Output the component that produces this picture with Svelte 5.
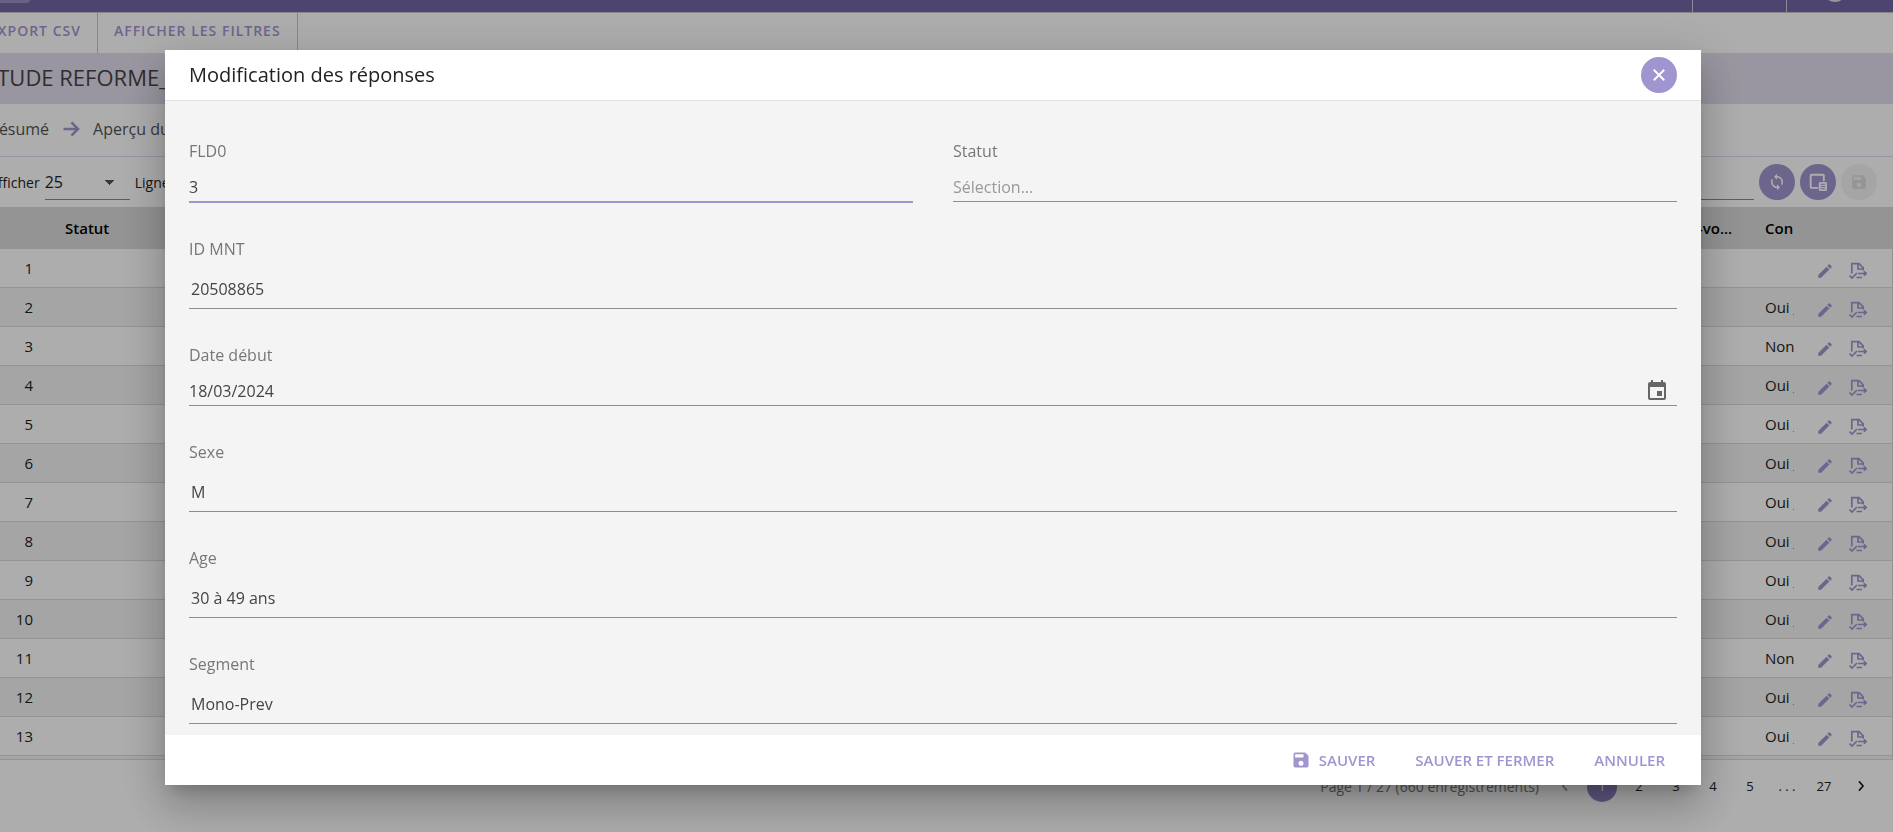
<script lang="ts">
	type Field = {
		id: string;
		label: string;
		value: string;
		kind: "text" | "select" | "date" | "area";
	};

	const rows = ["", "Oui _", "Non", "Oui _", "Oui _", "Oui _", "Oui _", "Oui _", "Oui _", "Oui _", "Non", "Oui _", "Oui _"];
	const pages = ["1", "2", "3", "4", "5"];

	let fields = $state<Field[]>([
		{ id: "fld0", label: "FLD0", value: "3", kind: "text" },
		{ id: "statut", label: "Statut", value: "", kind: "select" },
		{ id: "id-mnt", label: "ID MNT", value: "20508865", kind: "area" },
		{ id: "date-debut", label: "Date début", value: "18/03/2024", kind: "date" },
		{ id: "sexe", label: "Sexe", value: "M", kind: "area" },
		{ id: "age", label: "Age", value: "30 à 49 ans", kind: "area" },
		{ id: "segment", label: "Segment", value: "Mono-Prev", kind: "area" }
	]);
	let pageSize = $state("25");
</script>

{#snippet saveIcon()}
	<svg viewBox="0 0 24 24" aria-hidden="true">
		<path d="M17 3H5a2 2 0 0 0-2 2v14a2 2 0 0 0 2 2h14a2 2 0 0 0 2-2V7l-4-4zm-5 16a3 3 0 1 1 0-6 3 3 0 0 1 0 6zm3-10H5V5h10v4z" />
	</svg>
{/snippet}

<div class="page">
	<header class="topbar">
		<span class="topbar-menu"></span>
		<span class="topbar-cell"></span>
		<span class="topbar-cell user"><i class="avatar"></i></span>
	</header>

	<nav class="actions">
		<button>EXPORT CSV</button>
		<button>AFFICHER LES FILTRES</button>
	</nav>

	<h1>ETUDE REFORME_</h1>

	<nav class="breadcrumb">
		<a href="#resume">Résumé</a>
		<svg viewBox="0 0 24 24" aria-hidden="true"><path d="M3 12h17M12.500 4l8 8-8 8" /></svg>
		<span>Aperçu du</span>
	</nav>

	<div class="tools">
		<label for="page-size">Afficher</label>
		<select id="page-size" bind:value={pageSize}>
			<option>25</option>
			<option>50</option>
		</select>
		<span>Ligne</span>
		<input class="search" type="text" aria-label="Rechercher" />
		<button class="round" aria-label="Rafraîchir">
			<svg viewBox="0 0 24 24"><path d="M12 4V1L8 5l4 4V6a6 6 0 0 1 5.250 8.800l1.460 1.460A8 8 0 0 0 12 4zm0 14a6 6 0 0 1-5.250-8.800L5.290 7.740A8 8 0 0 0 12 20v3l4-4-4-4v3z" /></svg>
		</button>
		<button class="round" aria-label="Colonnes">
			<svg viewBox="0 0 24 24">
				<path d="M3 1h16a2 2 0 0 1 2 2v8h-2.500V3.500h-15v15H12V21H3a2 2 0 0 1-2-2V3a2 2 0 0 1 2-2z" />
				<path fill-rule="evenodd" d="M15 12h7a2 2 0 0 1 2 2v8a2 2 0 0 1-2 2h-7a2 2 0 0 1-2-2v-8a2 2 0 0 1 2-2zm.5 2.200v1.300h6v-1.300zm0 3v1.300h6v-1.300zm0 3v1.300h6v-1.300z" />
			</svg>
		</button>
		<button class="round" disabled aria-label="Enregistrer">{@render saveIcon()}</button>
	</div>

	<div class="grid">
		<table>
			<colgroup>
				<col class="col-index" />
				<col />
				<col class="col-call" />
				<col class="col-contact" />
				<col class="col-actions" />
			</colgroup>
			<thead>
				<tr>
					<th></th>
					<th>Statut</th>
					<th>Rendez-vo...</th>
					<th>Con</th>
					<th></th>
				</tr>
			</thead>
			<tbody>
				{#each rows as contact, i}
					<tr>
						<td class="index">{i + 1}</td>
						<td></td>
						<td></td>
						<td><div class="clip">{contact}</div></td>
						<td class="row-actions">
							<div>
								<button aria-label="Modifier">
									<svg viewBox="0 0 24 24"><path d="M3 17.250V21h3.750L17.810 9.940l-3.750-3.750L3 17.250zM20.710 7.040a1 1 0 0 0 0-1.410l-2.340-2.340a1 1 0 0 0-1.410 0l-1.830 1.830 3.750 3.750 1.830-1.830z" /></svg>
								</button>
								<button aria-label="Exporter">
									<svg class="outline" viewBox="0 0 18 18"><path d="M2.800 11.500V1.700H10l4.200 4.200v2.600M9 2v5h5M.5 13.500L3 16l5-5M9 11.500h8M14.800 9.300l2.500 2.200-2.500 2.200M7.500 15.500H13" /></svg>
								</button>
							</div>
						</td>
					</tr>
				{/each}
			</tbody>
		</table>
	</div>

	<footer class="pagination">
		<span class="summary">Page 1 / 27 (660 enregistrements)</span>
		<button disabled aria-label="Page précédente">
			<svg viewBox="0 0 24 24"><path d="M15.500 4l-7 8 7 8" /></svg>
		</button>
		{#each pages as page, i}
			<button class:current={i === 0}>{page}</button>
		{/each}
		<span class="dots">. . .</span>
		<button>27</button>
		<button aria-label="Page suivante">
			<svg viewBox="0 0 24 24"><path d="M8.500 4l7 8-7 8" /></svg>
		</button>
	</footer>
</div>

<div class="overlay">
	<div class="dialog" role="dialog" aria-modal="true" aria-labelledby="dialog-title">
		<header class="dialog-header">
			<h2 id="dialog-title">Modification des réponses</h2>
			<button class="round" aria-label="Fermer">
				<svg viewBox="0 0 24 24"><path d="M5 5l14 14M19 5L5 19" /></svg>
			</button>
		</header>

		<form class="dialog-body">
			{#each fields as field, i (field.id)}
				<div class="field" class:wide={i > 1}>
					<label for={field.id}>{field.label}</label>
					{#if field.kind === "area"}
						<textarea id={field.id} rows="1" bind:value={field.value}></textarea>
					{:else}
						<div class="control" class:active={i === 0}>
							<input
								id={field.id}
								type="text"
								placeholder={field.kind === "select" ? "Sélection..." : undefined}
								bind:value={field.value}
							/>
							{#if field.kind === "date"}
								<button type="button" class="calendar" aria-label="Choisir une date">
									<svg viewBox="0 0 24 24"><path d="M17 12h-5v5h5v-5zM16 1v2H8V1H6v2H5a2 2 0 0 0-2 2v14a2 2 0 0 0 2 2h14a2 2 0 0 0 2-2V5a2 2 0 0 0-2-2h-1V1h-2zm3 18H5V8h14v11z" /></svg>
								</button>
							{/if}
						</div>
					{/if}
				</div>
			{/each}
		</form>

		<footer class="dialog-footer">
			<button>{@render saveIcon()}SAUVER</button>
			<button>SAUVER ET FERMER</button>
			<button>ANNULER</button>
		</footer>
	</div>
</div>

<style>
	:global(body) {
		--accent: #a195cf;
		--line: #dadada;
		overflow: hidden;
		background: #fff;
		color: #222;
		font-family: "Open Sans", "Noto Sans", sans-serif;
		font-size: 14px;
	}

	button,
	input,
	select,
	textarea {
		margin: 0;
		padding: 0;
		border: 0;
		background: none;
		color: inherit;
		font: inherit;
		outline: none;
	}

	svg {
		display: block;
		fill: currentColor;
	}

	.page {
		margin-left: -27px;
	}

	.topbar {
		height: 12px;
		display: flex;
		justify-content: flex-end;
		overflow: hidden;
		border-bottom: 1px solid #c8c8c8;
		background: #7465a5;
	}

	.topbar-menu {
		width: 57px;
		height: 3px;
		margin-right: auto;
		border-radius: 0 0 3px 3px;
		background: #9a8fc2;
	}

	.topbar-cell {
		width: 93px;
		border-left: 1px solid #d0cce0;
	}

	.topbar-cell.user {
		width: 106px;
	}

	.avatar {
		display: block;
		width: 24px;
		height: 24px;
		box-sizing: border-box;
		margin: -22px 0 0 36px;
		border: 2px solid #e4deee;
		border-radius: 50%;
	}

	.actions {
		height: 40px;
		display: flex;
	}

	.actions button {
		padding: 0 16px 6px;
		border-right: 1px solid #c8c8c8;
		color: var(--accent);
		font-weight: 600;
		letter-spacing: 1px;
	}

	h1 {
		margin: 0;
		padding: 0 12px 2px;
		background: #e4deee;
		color: #444;
		font-size: 22px;
		font-weight: 400;
		line-height: 49px;
	}

	.breadcrumb {
		height: 50px;
		padding: 0 16px 2px;
		display: flex;
		align-items: center;
		gap: 12px;
		border-bottom: 1px solid #e0dcf0;
		color: #555;
		font-size: 16px;
	}

	.breadcrumb a {
		color: inherit;
		text-decoration: none;
	}

	.breadcrumb svg {
		width: 20px;
		height: 20px;
		fill: none;
		stroke: var(--accent);
		stroke-width: 3;
	}

	.tools {
		height: 50px;
		padding: 0 16px;
		display: flex;
		align-items: center;
		gap: 5px;
	}

	.tools select {
		width: 85px;
		height: 36px;
		padding-right: 14px;
		appearance: none;
		border-bottom: 1px solid #8a8a8a;
		background:
			linear-gradient(to top right, transparent 50%, #555 50%) 60px 16px / 5px 5px no-repeat,
			linear-gradient(to top left, transparent 50%, #555 50%) 65px 16px / 5px 5px no-repeat;
		font-size: 16px;
	}

	.search {
		width: 200px;
		height: 35px;
		margin-left: auto;
		border-bottom: 1px solid #8a8a8a;
	}

	.round {
		width: 36px;
		height: 36px;
		flex: none;
		display: flex;
		align-items: center;
		justify-content: center;
		border-radius: 50%;
		background: var(--accent);
		color: #fff;
	}

	.round svg {
		width: 18px;
		height: 18px;
	}

	.round:disabled {
		background: #f3f3f3;
		color: #dcdcdc;
	}

	.grid {
		padding-bottom: 3px;
		border-right: 1px solid var(--line);
		border-bottom: 1px solid var(--line);
		background: #f3f3f3;
	}

	table {
		width: 100%;
		table-layout: fixed;
		border-spacing: 0;
	}

	.col-index {
		width: 76px;
	}

	.col-call {
		width: 120px;
	}

	.col-contact {
		width: 61px;
	}

	.col-actions {
		width: 82px;
	}

	th {
		height: 42px;
		padding: 0 16px;
		overflow: hidden;
		background: var(--line);
		color: #000;
		font-size: 15px;
		font-weight: 600;
		text-align: left;
		white-space: nowrap;
	}

	td {
		height: 38px;
		padding: 0 16px;
		border-bottom: 1px solid var(--line);
		background: #fff;
		font-size: 15px;
		white-space: nowrap;
	}

	tr:nth-child(even) td {
		background: #f3f3f3;
	}

	.index {
		text-align: right;
	}

	.clip {
		overflow: hidden;
	}

	.row-actions {
		padding: 5px 16px 0 6px;
		height: 33px;
	}

	.row-actions div {
		display: flex;
		gap: 15px;
		color: var(--accent);
	}

	.row-actions svg {
		width: 18px;
		height: 18px;
	}

	.row-actions .outline {
		fill: none;
		stroke: currentColor;
		stroke-width: 1.7;
	}

	.pagination {
		height: 54px;
		padding-right: 17px;
		display: flex;
		align-items: center;
		justify-content: flex-end;
		gap: 7px;
		color: #222;
	}

	.summary {
		margin-right: 4px;
		padding-bottom: 2px;
		color: #777;
	}

	.pagination button,
	.dots {
		width: 30px;
		height: 30px;
		padding-bottom: 2px;
		box-sizing: border-box;
		display: flex;
		align-items: center;
		justify-content: center;
		border-radius: 50%;
		font-size: 13px;
	}

	.pagination .current {
		background: #8f81c0;
		color: #fff;
	}

	.pagination svg {
		width: 14px;
		height: 14px;
		fill: none;
		stroke: currentColor;
		stroke-width: 3;
	}

	.pagination button:disabled {
		color: #999;
	}

	.overlay {
		position: fixed;
		inset: 0 0 0 -27px;
		padding: 50px 192px 47px;
		display: flex;
		background: rgba(0, 0, 0, 0.32);
	}

	.dialog {
		flex: 1;
		display: flex;
		flex-direction: column;
		background: #fff;
		box-shadow:
			0 11px 15px -7px rgba(0, 0, 0, 0.2),
			0 24px 38px 3px rgba(0, 0, 0, 0.14),
			0 9px 46px 8px rgba(0, 0, 0, 0.12);
	}

	.dialog-header {
		height: 50px;
		padding: 0 24px;
		display: flex;
		align-items: center;
		justify-content: space-between;
		border-bottom: 1px solid #e0e0e0;
	}

	.dialog-header svg {
		fill: none;
		stroke: currentColor;
		stroke-width: 2.4;
	}

	h2 {
		margin: 0;
		padding-bottom: 2px;
		font-size: 20px;
		font-weight: 400;
	}

	.dialog-body {
		flex: 1;
		min-height: 0;
		padding: 38px 24px 0;
		display: grid;
		grid-template-columns: 1fr 1fr;
		align-content: start;
		gap: 34px 40px;
		overflow: hidden;
		background: #f4f4f4;
		color: #444;
		font-size: 16px;
		line-height: 24px;
	}

	.field {
		display: flex;
		flex-direction: column;
	}

	.field.wide {
		grid-column: 1 / -1;
	}

	.field label {
		color: #777;
	}

	.control {
		margin-top: 10px;
		padding: 2px 0;
		display: flex;
		align-items: center;
		border-bottom: 1px solid #8c8c8c;
	}

	.control.active {
		border-bottom: 2px solid var(--accent);
	}

	.control input {
		flex: 1;
		height: 24px;
	}

	.control input::placeholder {
		color: #999;
		opacity: 1;
	}

	.calendar {
		margin-right: 8px;
		color: #666;
	}

	.calendar svg {
		width: 24px;
		height: 24px;
	}

	textarea {
		height: 24px;
		padding: 16px 2px 7px;
		overflow: hidden;
		border-bottom: 1px solid #8c8c8c;
		resize: none;
	}

	.dialog-footer {
		height: 50px;
		padding: 0 24px;
		display: flex;
		align-items: center;
		justify-content: flex-end;
		gap: 16px;
	}

	.dialog-footer button {
		padding: 0 12px;
		display: flex;
		align-items: center;
		gap: 8px;
		color: var(--accent);
		font-size: 15px;
		font-weight: 600;
	}

	.dialog-footer svg {
		width: 20px;
		height: 20px;
	}
</style>
